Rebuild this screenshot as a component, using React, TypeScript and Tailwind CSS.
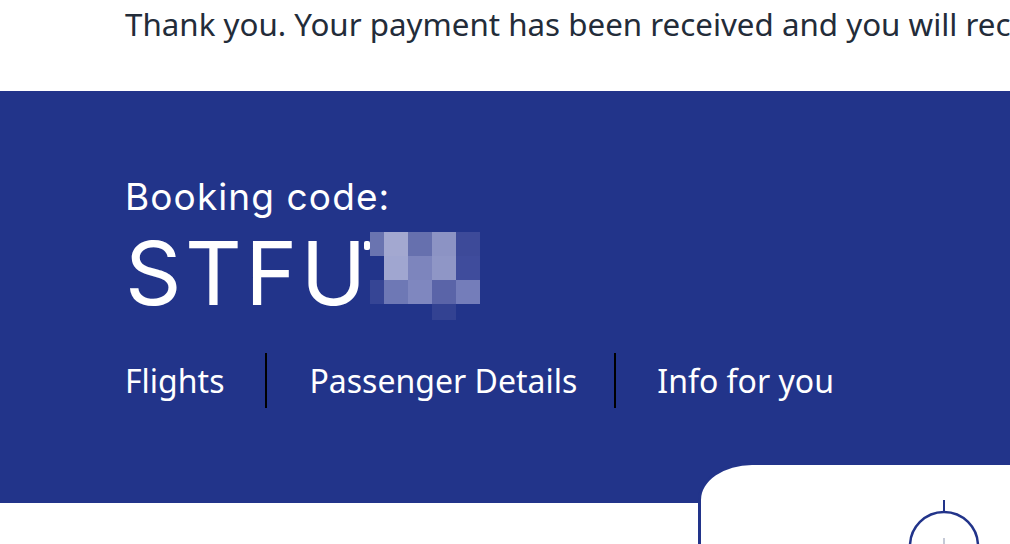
import React from "react";

const mosaic: (string | null)[][] = [
  ["#6a74b0", "#a3a8d0", "#6670ae", "#8c93c4", "#3d4a99"],
  [null, "#a0a6d0", "#7d85bd", "#8f96c6", "#3f4c9c"],
  ["#364595", "#6e78b5", "#7f87bf", "#5a64a8", "#747dba"],
  [null, null, null, "#334292", null],
];
const colW = [14, 24, 24, 24, 24];
const rowH = [24, 24, 24, 16];

function Mosaic() {
  return (
    <div className="relative mt-[3px] flex flex-col">
      <div className="absolute left-[-6px] top-[9px] h-[9px] w-[6px] rounded-[2px] bg-white" />
      {mosaic.map((row, r) => (
        <div key={r} className="flex">
          {row.map((c, i) => (
            <div
              key={i}
              style={{ width: colW[i], height: rowH[r], background: c ?? "transparent" }}
            />
          ))}
        </div>
      ))}
    </div>
  );
}

export default function App() {
  return (
    <div className="w-[1010px] h-[544px] overflow-hidden bg-white">
      <div className="h-[91px] pl-[125px] pt-[4px]">
        <p
          className="whitespace-nowrap text-[31.3px] leading-[40px] text-[#232c39]"
          style={{ fontFamily: '"Noto Sans", sans-serif' }}
        >
          Thank you. Your payment has been received and you will rec
        </p>
      </div>
      <div className="bg-[#22348a] pl-[125px] pt-[86px] pb-[95px] text-white">
        <div
          className="text-[37px] leading-[40px] tracking-[1.1px]"
          style={{ fontFamily: "Inter, sans-serif" }}
        >
          Booking code:
        </div>
        <div className="mt-[12px] flex items-start">
          <span
            className="text-[88px] leading-[88px] tracking-[3.5px]"
            style={{ fontFamily: "Inter, sans-serif" }}
          >
            STFU
          </span>
          <Mosaic />
        </div>
        <nav
          className="mt-[33px] flex h-[55px] text-[32px] leading-[55px]"
          style={{ fontFamily: '"Noto Sans", sans-serif' }}
        >
          <span className="border-r-2 border-black pr-[41px]">Flights</span>
          <span className="border-r-2 border-black pl-[42px] pr-[37px]">Passenger Details</span>
          <span className="pl-[41px]">Info for you</span>
        </nav>
      </div>
      <div className="ml-[698px] mt-[-41px] h-[200px] w-[400px] rounded-tl-[54px_38px] border-[3px] border-[#22348a] bg-white pl-[205px] pt-[35px]">
        <svg width="76" height="90" viewBox="0 0 76 90" fill="none">
          <line x1="38" y1="0" x2="38" y2="12" stroke="#22348a" strokeWidth="2" />
          <circle cx="38" cy="46" r="34" stroke="#22348a" strokeWidth="2.5" />
          <line x1="38" y1="38" x2="38" y2="46" stroke="#c5c9d6" strokeWidth="2" />
        </svg>
      </div>
    </div>
  );
}
